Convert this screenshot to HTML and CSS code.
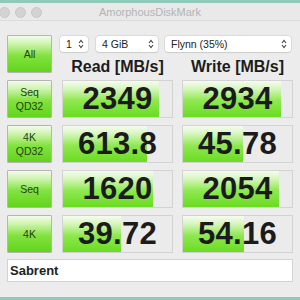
FILE: index.html
```html
<!DOCTYPE html>
<html lang="en">
<head>
    <meta charset="UTF-8">
    <meta name="viewport" content="width=device-width, initial-scale=1.0">
    <title>AmorphousDiskMark</title>
    <link rel="stylesheet" href="styles.css">
</head>
<body>
    <div class="window">
        <div class="titlebar">
            <div class="lights">
                <span class="light"></span>
                <span class="light"></span>
                <span class="light"></span>
            </div>
            <div class="title">AmorphousDiskMark</div>
        </div>

        <div class="content">
            <div class="board">
                <button class="test-btn all-btn">All</button>

                <div class="selects">
                    <div class="select sel-count">
                        <span>1</span>
                        <svg class="chev" width="6" height="10" viewBox="0 0 6 10"><path d="M1 4 L3 1.5 L5 4 M1 6 L3 8.5 L5 6" fill="none" stroke="#444" stroke-width="1.1"/></svg>
                    </div>
                    <div class="select sel-size">
                        <span>4 GiB</span>
                        <svg class="chev" width="6" height="10" viewBox="0 0 6 10"><path d="M1 4 L3 1.5 L5 4 M1 6 L3 8.5 L5 6" fill="none" stroke="#444" stroke-width="1.1"/></svg>
                    </div>
                    <div class="select sel-disk">
                        <span>Flynn (35%)</span>
                        <svg class="chev" width="6" height="10" viewBox="0 0 6 10"><path d="M1 4 L3 1.5 L5 4 M1 6 L3 8.5 L5 6" fill="none" stroke="#444" stroke-width="1.1"/></svg>
                    </div>
                </div>

                <div class="col-head">Read [MB/s]</div>
                <div class="col-head">Write [MB/s]</div>

                <button class="test-btn">Seq<br>QD32</button>
                <div class="result"><div class="fill" style="width: 96px"></div><span class="value">2349</span></div>
                <div class="result"><div class="fill" style="width: 98px"></div><span class="value">2934</span></div>

                <button class="test-btn">4K<br>QD32</button>
                <div class="result"><div class="fill" style="width: 84px"></div><span class="value">613.8</span></div>
                <div class="result"><div class="fill" style="width: 60px"></div><span class="value">45.78</span></div>

                <button class="test-btn">Seq</button>
                <div class="result"><div class="fill" style="width: 90px"></div><span class="value">1620</span></div>
                <div class="result"><div class="fill" style="width: 96px"></div><span class="value">2054</span></div>

                <button class="test-btn">4K</button>
                <div class="result"><div class="fill" style="width: 58px"></div><span class="value">39.72</span></div>
                <div class="result"><div class="fill" style="width: 61px"></div><span class="value">54.16</span></div>
            </div>

            <div class="comment">Sabrent</div>
        </div>
    </div>
</body>
</html>
```

FILE: styles.css
```css
body {
    margin: 0;
    width: 300px;
    height: 300px;
    background: #8fc9ba;
    font-family: "Liberation Sans", Arial, Helvetica, sans-serif;
    overflow: hidden;
}

.window {
    margin-top: 3px;
    height: 294px;
    background: #ececec;
    display: flex;
    flex-direction: column;
}

.titlebar {
    position: relative;
    height: 17px;
    background: #e9e9e9;
    border-bottom: 1px solid #dcdcdc;
    display: flex;
    align-items: center;
    justify-content: center;
}

.lights {
    position: absolute;
    left: -1px;
    top: 4px;
    display: flex;
    gap: 5px;
}

.light {
    width: 9px;
    height: 9px;
    border-radius: 50%;
    background: #d3d3d3;
    border: 0.5px solid #c8c8c8;
}

.title {
    font-size: 11px;
    color: #b3b3b3;
}

.content {
    padding: 15px 7px 0 7px;
    display: flex;
    flex-direction: column;
    gap: 6px;
}

.board {
    display: grid;
    grid-template-columns: 46px 111px 111px;
    grid-template-rows: 16px 14px 38px 38px 38px 38px;
    column-gap: 9px;
    row-gap: 7px;
}

.test-btn {
    margin: 0;
    padding: 0;
    width: 45px;
    border: 1px solid #b4b4b4;
    border-radius: 1px;
    background: linear-gradient(to bottom, #f3fbec 0%, #d2f5b4 20%, #82e23e 55%, #62d41c 100%);
    font-family: "Liberation Sans", Arial, sans-serif;
    font-size: 10.5px;
    line-height: 14px;
    color: #1f4212;
}

.all-btn {
    grid-row: 1 / 3;
    margin-top: -1px;
}

.selects {
    grid-column: 2 / 4;
    margin-left: -2px;
    display: flex;
    gap: 7px;
}

.select {
    height: 16px;
    box-sizing: border-box;
    background: #fff;
    border-radius: 3px;
    box-shadow: 0 0 0 0.5px #c9c9c9, 0 1px 1px rgba(0, 0, 0, 0.12);
    font-size: 10.5px;
    color: #222;
    padding: 0 4px 0 6px;
    display: flex;
    align-items: center;
    justify-content: space-between;
}

.sel-count { width: 28px; margin-right: 1px; }
.sel-size { width: 62px; }
.sel-disk { width: 126px; }

.col-head {
    font-size: 16px;
    font-weight: bold;
    color: #1c1c1c;
    text-align: center;
    line-height: 14px;
    margin-top: 1px;
}

.result {
    position: relative;
    box-sizing: border-box;
    background: #ebebeb;
    border: 1px solid #d3d3d3;
    display: flex;
    align-items: center;
    justify-content: center;
}

.fill {
    position: absolute;
    left: 0;
    top: 0;
    bottom: 0;
    background: linear-gradient(to bottom, #f6fcf1 0%, #d6f6bc 22%, #8ee84e 55%, #6adc22 100%);
}

.value {
    position: relative;
    font-size: 31px;
    font-weight: bold;
    color: #1b1b1b;
    letter-spacing: 0.3px;
}

.comment {
    height: 23px;
    box-sizing: border-box;
    width: 286px;
    background: #fff;
    border: 1px solid #d3d3d3;
    padding-left: 2px;
    font-size: 13px;
    font-weight: bold;
    line-height: 21px;
    color: #222;
}
```
